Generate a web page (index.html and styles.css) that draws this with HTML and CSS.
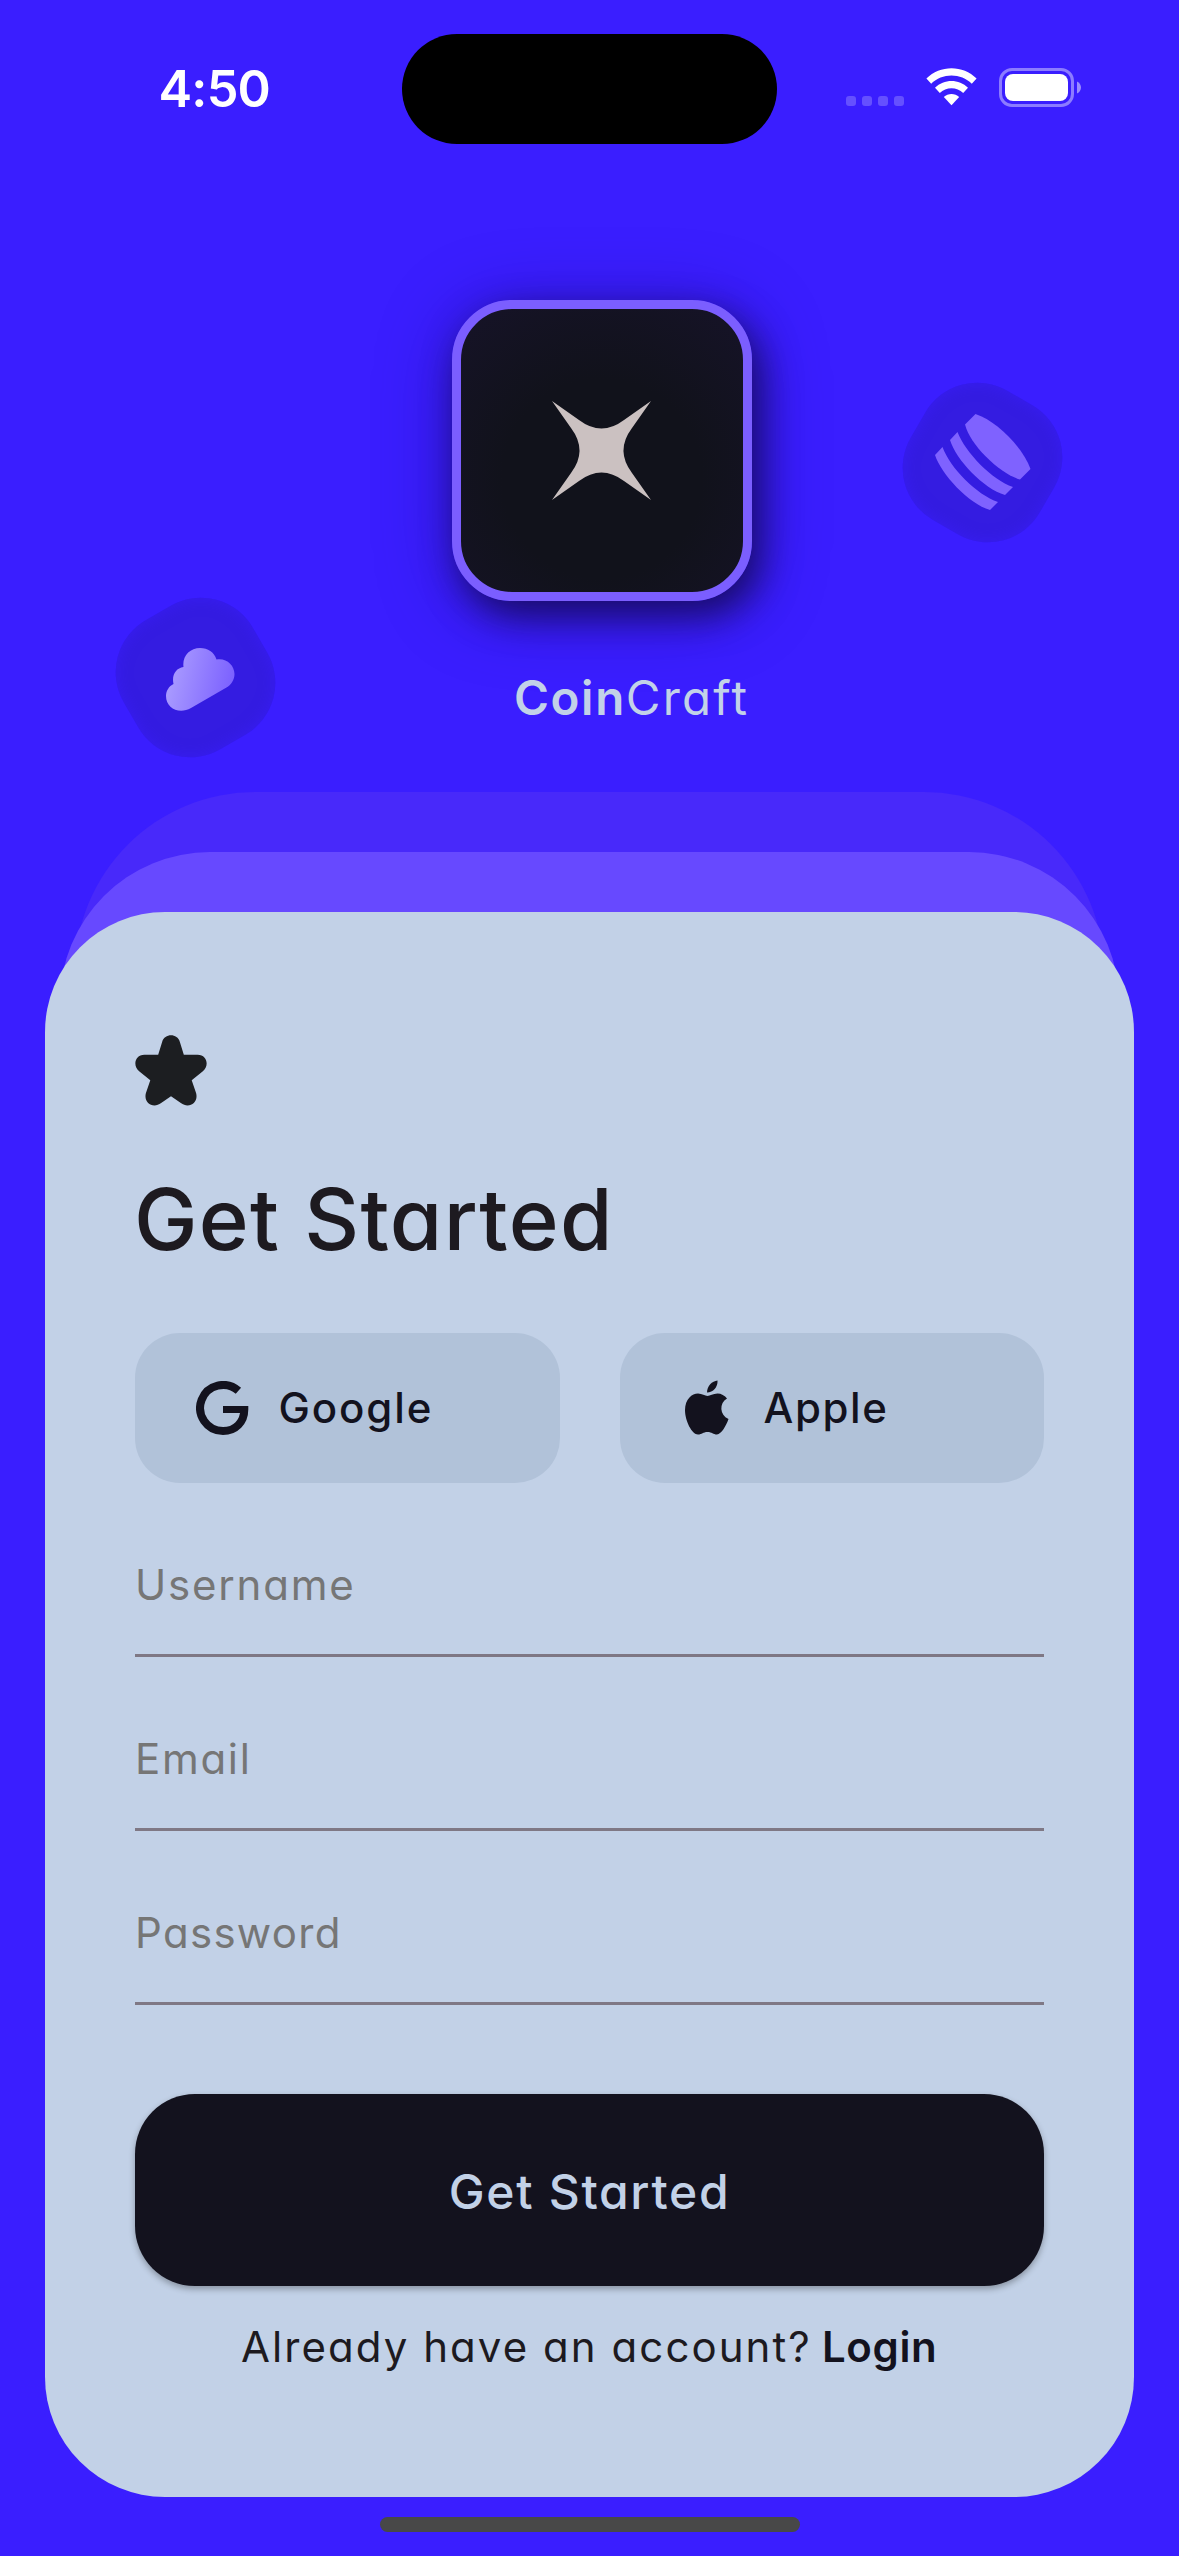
FILE: index.html
```html
<!DOCTYPE html>
<html lang="en">
<head>
<meta charset="utf-8">
<title>CoinCraft</title>
<link rel="stylesheet" href="styles.css">
</head>
<body>
<div class="screen">
  <header class="status">
    <span class="time">4:50</span>
    <div class="island"></div>
    <div class="indicators">
      <div class="signal"><i></i><i></i><i></i><i></i></div>
      <svg class="wifi" viewBox="0 0 51 38" fill="#fff">
        <path d="M0.4 10.6C14 -3.2 37 -3.2 50.6 10.6L45.8 15.8C35 4.8 16 4.8 5.2 15.8Z"/>
        <path d="M9 19.8C18 10.7 33 10.7 42 19.8L37.2 24.9C31 18.6 20 18.6 13.8 24.9Z"/>
        <path d="M17.8 29C22 25 29 25 33.2 29L25.5 37.2Z"/>
      </svg>
      <svg class="battery" viewBox="0 0 83 39">
        <rect x="1.5" y="1.5" width="72" height="36" rx="11.5" fill="none" stroke="#8c7cff" stroke-width="3"/>
        <rect x="6" y="6" width="63" height="27" rx="8" fill="#fff"/>
        <path d="M78 13.5C80.500 14.500 82 17 82 19.500S80.500 24.500 78 25.500Z" fill="#9a8cff"/>
      </svg>
    </div>
  </header>

  <section class="brand">
    <div class="logo">
      <svg viewBox="0 0 99 99" fill="#cbc1c1"><path d="M0 0L27 19Q49.500 36 72 19L99 0L80 27Q63 49.500 80 72L99 99L72 80Q49.500 63 27 80L0 99L19 72Q36 49.500 19 27Z"/></svg>
    </div>
    <div class="name"><b>Coin</b><span>Craft</span></div>
    <div class="badge badge-coins">
      <svg viewBox="0 0 96 96" fill="#7f62ff">
        <path d="M40.500 0C62 7 88 34 95.500 55L85 65.500C65 60 35 31 30 10.500Z"/>
        <path d="M22.500 18C30 38 57 66 78 73L70 81C49 75 21 46 15 26Z"/>
        <path d="M7.500 33C15 54 42 81 63 88L55 96C34 90 6 60 0 41Z"/>
      </svg>
    </div>
    <div class="badge badge-cloud">
      <svg viewBox="0 0 69 64">
        <defs><linearGradient id="sky" x1="0" y1="0.4" x2="1" y2="0.6"><stop offset="0.100" stop-color="#a798ff"/><stop offset="1" stop-color="#7a5fff"/></linearGradient></defs>
        <path fill="url(#sky)" d="M7.500 36C5.500 27 10 20 17.500 19C16 8 24 0 34 0C42 0 48 4 50.500 11.500C60 9.500 68.500 17 68.500 26C68.500 32 65 37 60.500 39.500L25 60C13 67 0 60 0 48C0 43 3 38 7.500 36Z"/>
      </svg>
    </div>
  </section>

  <main class="stack">
    <div class="layer layer-far"></div>
    <div class="layer layer-near"></div>
    <form class="card">
      <svg class="star" viewBox="0 0 72 72"><path fill="#1c1e21" d="M23 20L27 7C29.500 -2 42.500 -2 45 7L49 20H63C73 20 75 32 68 37L57 46L61.500 59C64 69 54 75 46 69L36 62L26 69C18 75 8 69 10.500 59L15 46L4 37C-3 32 -1 20 9 20Z"/></svg>
      <h1 class="title">Get Started</h1>
      <div class="social">
        <button type="button" class="provider">
          <svg class="google" viewBox="0 0 54 54" fill="none" stroke="#13121e"><path stroke-width="8" d="M42.400 9.800A23 23 0 1 0 27 50C39.500 50 48.300 41 48.300 28.500V25"/><path stroke-width="7" d="M50 28.500H27"/></svg>
          <span class="t-google">Google</span>
        </button>
        <button type="button" class="provider">
          <svg class="apple" viewBox="0 0 44 55" fill="#13121e"><path d="M32.500 0.500C33 7 28 12.500 22 12.500C22 6 27 1 32.500 0.500Z"/><path d="M42 18.500C34 23 34.500 35 43.500 39C41 46 36.500 54 32 54.500C28 54.500 27 52 22.500 52C18 52 17 54.500 13 54.500C7 54.500 0 41 0 30C0 19 7 13.500 13 13.500C17 13.500 20 16 22.500 16C25 16 28 13.500 32.500 13.500C36 13.500 40 15.500 42 18.500Z"/></svg>
          <span class="t-apple">Apple</span>
        </button>
      </div>
      <div class="field"><span>Username</span></div>
      <div class="field field-email"><span>Email</span></div>
      <div class="field field-password"><span>Password</span></div>
      <button type="button" class="cta"><span>Get Started</span></button>
      <p class="foot"><span>Already have an account?</span><b>Login</b></p>
    </form>
  </main>
  <div class="home"></div>
</div>
</body>
</html>
```
FILE: styles.css
```css
* { box-sizing: border-box; }
body { margin: 0; background: #3a1eff; }
.screen {
  position: relative;
  width: 1179px;
  height: 2556px;
  overflow: hidden;
  background: #3a1eff;
  font-family: Inter, "Noto Sans", sans-serif;
  font-feature-settings: "cv11" 1;
  display: flex;
  flex-direction: column;
}
button { border: 0; font: inherit; font-feature-settings: inherit; }
svg { display: block; }

.status { height: 177px; display: flex; align-items: flex-start; padding-top: 34px; flex: none; }
.time { width: 402px; padding-left: 158.500px; padding-top: 24px; font-size: 50.5px; line-height: 62px; font-weight: 600; letter-spacing: -.8px; color: #fff; }
.island { width: 375px; height: 110px; border-radius: 55px; background: #000; }
.indicators { display: flex; padding: 34px 0 0 69px; }
.signal { display: flex; gap: 6px; padding-top: 28px; }
.signal i { width: 10px; height: 10px; border-radius: 3px; background: #6550ff; }
.wifi { width: 51px; height: 38px; margin-left: 22px; }
.battery { width: 83px; height: 39px; margin-left: 22px; }

.brand { position: relative; height: 615px; flex: none; padding: 123px 0 0 452px; }
.logo {
  width: 300px; height: 301px;
  border: 9px solid #7b5eff;
  border-radius: 60px;
  background: radial-gradient(circle at 50% 60%, #11121b 45%, #161328 100%);
  box-shadow: 9px 15px 36px rgba(18, 8, 70, .75), 0 9px 75px rgba(25, 10, 100, .4);
  display: grid; place-items: center;
}
.logo svg { width: 99px; height: 99px; margin-right: 1px; }
.name { display: flex; margin: 66px 0 0 62px; font-size: 47.500px; line-height: 62px; color: #c2d2e8; }
.name b { font-weight: 600; letter-spacing: 1.600px; }
.name span { font-weight: 400; letter-spacing: 2.200px; }
.badge {
  position: absolute;
  width: 162px; height: 162px;
  display: grid; place-items: center;
}
.badge::before {
  content: "";
  position: absolute; inset: 6.500px;
  border-radius: 60px;
  background: #341ce1;
  box-shadow: inset 0 0 15px rgba(58, 30, 255, .6);
  transform: rotate(30deg);
}
.badge svg { position: relative; }
.badge-coins { left: 901px; top: 204px; }
.badge-coins svg { width: 96px; height: 96px; left: 1px; }
.badge-cloud { left: 114px; top: 419px; }
.badge-cloud::before { transform: rotate(-30deg); }
.badge-cloud svg { width: 69px; height: 64px; left: 5px; top: 3px; }

.stack { display: grid; padding: 0 45px; height: 1705px; flex: none; }
.layer, .card { grid-area: 1 / 1; }
.layer-far { margin: .4px 30px 0; height: 400px; border-radius: 180px; background: #4829fa; }
.layer-near { margin: 60.400px 15px 0; height: 400px; border-radius: 150px; background: #6749ff; }
.card {
  margin: 120.400px 0 0;
  padding: 122.600px 90px 0;
  border-radius: 120px;
  background: #c2d1e7;
  display: flex; flex-direction: column;
}
.star { width: 72px; height: 71px; }
.title { margin: 63px 0 0 -1px; font-size: 85px; line-height: 102px; font-weight: 500; letter-spacing: 1.300px; color: #1d1a20; white-space: nowrap; }
.social { display: grid; grid-template-columns: 1fr 1fr; gap: 60px; margin-top: 62px; }
.provider { height: 150px; padding: 0 0 0 61px; border-radius: 45px; background: #b1c2d9; color: #13121e; display: flex; align-items: center; font-size: 42px; font-weight: 500; }
.google { width: 54px; height: 54px; }
.apple { width: 44px; height: 55px; margin-left: 4px; }
.provider span { margin-left: 28.500px; letter-spacing: 1.900px; }
.provider .t-apple { margin-left: 35px; letter-spacing: 1.600px; }
.field { height: 174px; border-bottom: 3px solid #7f7885; padding: 0; display: flex; align-items: flex-end; font-size: 42px; line-height: 50px; color: #767676; font-weight: 400; letter-spacing: 1.800px; }
.field-email { letter-spacing: 1.700px; }
.field-password { letter-spacing: 1.300px; }
.field span { margin-bottom: 43.500px; }
.cta { height: 192px; margin-top: 89.500px; padding-top: 4px; border-radius: 60px; background: #13121e; color: #c2d1e7; font-size: 48px; font-weight: 500; letter-spacing: 1.700px; box-shadow: 0 3px 6px rgba(0, 0, 0, .3); }
.foot { margin: 36px 0 0 106px; display: flex; font-size: 42px; line-height: 50px; color: #1d1a20; font-weight: 400; white-space: nowrap; }
.foot span { width: 581px; letter-spacing: 2.050px; }
.foot b { font-weight: 600; letter-spacing: .6px; color: #13121e; }
.home { width: 420px; height: 15px; border-radius: 8px; background: #484848; margin: 20px auto 0; flex: none; }
```
